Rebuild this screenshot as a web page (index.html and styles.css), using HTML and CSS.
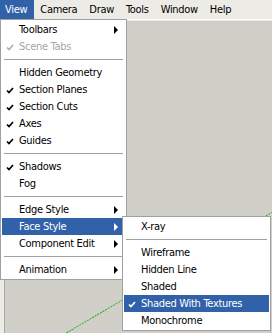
FILE: index.html
```html
<!DOCTYPE html>
<html lang="en">
<head>
    <meta charset="UTF-8">
    <title>View menu</title>
    <link rel="stylesheet" href="styles.css">
</head>
<body>
    <div class="menubar">
        <span class="menubar-item active">View</span>
        <span class="menubar-item">Camera</span>
        <span class="menubar-item">Draw</span>
        <span class="menubar-item">Tools</span>
        <span class="menubar-item">Window</span>
        <span class="menubar-item">Help</span>
    </div>

    <div class="workspace">
        <div class="dock"></div>
        <div class="canvas">
            <svg class="axis" viewBox="0 0 266 313" preserveAspectRatio="none">
                <line x1="61" y1="313" x2="266" y2="192" stroke="#22b022" stroke-width="1" stroke-dasharray="2 1"/>
            </svg>
        </div>
    </div>

    <!-- View menu -->
    <div class="menu main-menu">
        <div class="item">Toolbars<span class="arrow"></span></div>
        <div class="item disabled"><svg class="check" width="8" height="7"><path d="M1 3.5L3 5.6L7 1"/></svg>Scene Tabs</div>
        <div class="sep"></div>
        <div class="item">Hidden Geometry</div>
        <div class="item"><svg class="check" width="8" height="7"><path d="M1 3.5L3 5.6L7 1"/></svg>Section Planes</div>
        <div class="item"><svg class="check" width="8" height="7"><path d="M1 3.5L3 5.6L7 1"/></svg>Section Cuts</div>
        <div class="item"><svg class="check" width="8" height="7"><path d="M1 3.5L3 5.6L7 1"/></svg>Axes</div>
        <div class="item"><svg class="check" width="8" height="7"><path d="M1 3.5L3 5.6L7 1"/></svg>Guides</div>
        <div class="sep"></div>
        <div class="item"><svg class="check" width="8" height="7"><path d="M1 3.5L3 5.6L7 1"/></svg>Shadows</div>
        <div class="item">Fog</div>
        <div class="sep"></div>
        <div class="item">Edge Style<span class="arrow"></span></div>
        <div class="item selected">Face Style<span class="arrow"></span></div>
        <div class="item">Component Edit<span class="arrow"></span></div>
        <div class="sep"></div>
        <div class="item">Animation<span class="arrow"></span></div>
    </div>

    <!-- Face Style submenu -->
    <div class="menu sub-menu">
        <div class="item">X-ray</div>
        <div class="sep"></div>
        <div class="item">Wireframe</div>
        <div class="item">Hidden Line</div>
        <div class="item">Shaded</div>
        <div class="item selected"><svg class="check" width="8" height="7"><path d="M1 3.5L3 5.6L7 1"/></svg>Shaded With Textures</div>
        <div class="item">Monochrome</div>
    </div>
</body>
</html>
```

FILE: styles.css
```css
* {
    margin: 0;
    padding: 0;
    box-sizing: border-box;
}

body {
    font-family: "DejaVu Sans Condensed", "DejaVu Sans", sans-serif;
    font-size: 11px;
    letter-spacing: -0.3px;
    color: #000;
    width: 272px;
    height: 333px;
    overflow: hidden;
    position: relative;
    display: flex;
    flex-direction: column;
    background: #ecebe6;
}

/* menu bar */
.menubar {
    height: 19px;
    display: flex;
    background: #ecebe6;
}

.menubar-item {
    line-height: 19px;
    padding: 0 6px;
}

.menubar-item:first-child {
    padding: 0 7px 0 5px;
}

.menubar-item.active {
    background: #3162a9;
    color: #fff;
}

/* workspace */
.workspace {
    flex: 1;
    display: flex;
    border-top: 1px solid #fff;
}

.dock {
    width: 5px;
    background: #ecebe6;
    border-right: 1px solid #a8a8a4;
}

.canvas {
    flex: 1;
    position: relative;
    background: #d0d0c9;
    border-top: 1px solid #e6e6e2;
}

.axis {
    position: absolute;
    left: 0;
    top: 0;
    width: 100%;
    height: 100%;
}

/* menus */
.menu {
    position: absolute;
    background: #fff;
    border: 1px solid #a0a0a0;
    padding: 1px;
}

.main-menu {
    left: 0;
    top: 19px;
    width: 127px;
}

.sub-menu {
    left: 122px;
    top: 216px;
    width: 149px;
}

.item {
    position: relative;
    height: 17px;
    line-height: 17px;
    padding-left: 17px;
    white-space: nowrap;
}

.item.disabled {
    color: #a5a5a5;
}

.item.selected {
    background: #3162a9;
    color: #fff;
}

.check {
    position: absolute;
    left: 4px;
    top: 6px;
    fill: none;
    stroke: #000;
    stroke-width: 1.7;
}

.disabled .check {
    stroke: #b0b0b0;
}

.selected .check {
    stroke: #fff;
}

.arrow {
    position: absolute;
    right: 7px;
    top: 5px;
    width: 0;
    height: 0;
    border-top: 4px solid transparent;
    border-bottom: 4px solid transparent;
    border-left: 4px solid #000;
}

.selected .arrow {
    border-left-color: #fff;
}

.sep {
    height: 9px;
    padding-top: 4px;
}

.sep::after {
    content: "";
    display: block;
    margin: 0 2px;
    border-top: 1px solid #a0a0a0;
}
```
